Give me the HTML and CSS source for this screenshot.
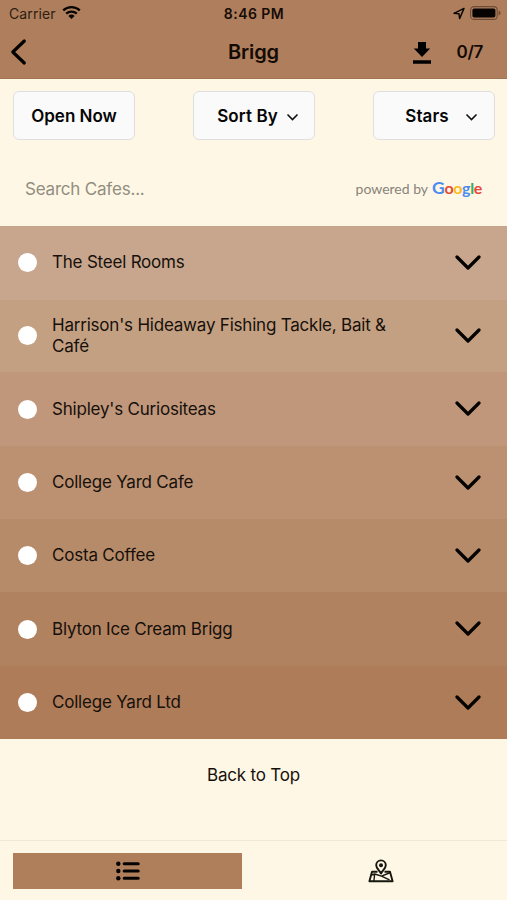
FILE: index.html
```html
<!DOCTYPE html>
<html lang="en">
<head>
<meta charset="utf-8">
<title>Brigg</title>
<link rel="stylesheet" href="styles.css">
</head>
<body>
<div class="app">
  <header class="header">
    <div class="status">
      <div class="status-left"><span class="carrier">Carrier</span>
        <svg class="wifi" width="19" height="15" viewBox="0 0 19 15"><g fill="none" stroke="#090503" stroke-width="2.3"><path d="M1.2 5.4a12 12 0 0 1 16.6 0"/><path d="M4.2 8.7a7.7 7.7 0 0 1 10.6 0"/></g><path d="M9.5 14 6.4 10.9a4.5 4.5 0 0 1 6.2 0Z" fill="#090503"/></svg>
      </div>
      <span class="time">8:46 PM</span>
      <div class="status-right">
        <svg width="12" height="13" viewBox="0 0 12 13"><path d="M1 6.3 11 1.4 6.6 11.6 6 6.8Z" fill="none" stroke="#090503" stroke-width="1.4" stroke-linejoin="round"/></svg>
        <svg width="31" height="14" viewBox="0 0 31 14"><rect x=".6" y=".6" width="26.6" height="12.8" rx="3.5" fill="none" stroke="#6f4c36" stroke-width="1.1"/><rect x="2.4" y="2.4" width="23" height="9.2" rx="1.8" fill="#060302"/><path d="M28.6 4.6q2 .8 2 2.4t-2 2.4Z" fill="#6f4c36"/></svg>
      </div>
    </div>
    <div class="nav">
      <svg class="back" width="18" height="28" viewBox="0 0 18 28"><path d="M15.300 3 3.800 14 15.300 25" fill="none" stroke="#000" stroke-width="3.2" stroke-linecap="round" stroke-linejoin="round"/></svg>
      <h1 class="title">Brigg</h1>
      <div class="nav-right">
        <svg class="download" width="20" height="24" viewBox="0 0 20 24"><path d="M6 1h8v6.5h4.2L10 16 1.8 7.500H6ZM1 19.200h18v3.600H1Z" fill="#000"/></svg>
        <span class="count">0/7</span>
      </div>
    </div>
  </header>
  <div class="filters">
    <button class="filter"><span class="label-open">Open Now</span></button>
    <button class="filter"><span class="label-sort">Sort By</span><svg class="chev-sort" width="13" height="9" viewBox="0 0 13 9"><path d="m1.500 1.500 5 5 5-5" fill="none" stroke="#111" stroke-width="1.600"/></svg></button>
    <button class="filter"><span class="label-stars">Stars</span><svg class="chev-stars" width="13" height="9" viewBox="0 0 13 9"><path d="m1.500 1.500 5 5 5-5" fill="none" stroke="#111" stroke-width="1.600"/></svg></button>
  </div>
  <div class="search">
    <span class="placeholder">Search Cafes...</span>
    <div class="powered"><span class="by">powered by</span><span class="google"><span class="b cap">G</span><span class="r">o</span><span class="y">o</span><span class="b">g</span><span class="g">l</span><span class="r">e</span></span></div>
  </div>
  <main class="list">
    <div class="row r1"><i class="dot"></i><span class="name">The Steel Rooms</span><svg class="chev" viewBox="0 0 26 16"><path d="M2 2 13 13 24 2"/></svg></div>
    <div class="row r2"><i class="dot"></i><span class="name">Harrison's Hideaway Fishing Tackle, Bait &amp;<br>Café</span><svg class="chev" viewBox="0 0 26 16"><path d="M2 2 13 13 24 2"/></svg></div>
    <div class="row r3"><i class="dot"></i><span class="name">Shipley's Curiositeas</span><svg class="chev" viewBox="0 0 26 16"><path d="M2 2 13 13 24 2"/></svg></div>
    <div class="row r4"><i class="dot"></i><span class="name">College Yard Cafe</span><svg class="chev" viewBox="0 0 26 16"><path d="M2 2 13 13 24 2"/></svg></div>
    <div class="row r5"><i class="dot"></i><span class="name">Costa Coffee</span><svg class="chev" viewBox="0 0 26 16"><path d="M2 2 13 13 24 2"/></svg></div>
    <div class="row r6"><i class="dot"></i><span class="name">Blyton Ice Cream Brigg</span><svg class="chev" viewBox="0 0 26 16"><path d="M2 2 13 13 24 2"/></svg></div>
    <div class="row r7"><i class="dot"></i><span class="name">College Yard Ltd</span><svg class="chev" viewBox="0 0 26 16"><path d="M2 2 13 13 24 2"/></svg></div>
  </main>
  <div class="top-link"><span>Back to Top</span></div>
  <footer class="tabs">
    <div class="tab active"><svg width="24" height="20" viewBox="0 0 24 20"><g fill="#050302"><circle cx="2.300" cy="2.800" r="2.200"/><circle cx="2.300" cy="10" r="2.200"/><circle cx="2.300" cy="17.200" r="2.200"/></g><path d="M8.200 2.800h14M8.200 10h14M8.200 17.200h14" stroke="#050302" stroke-width="3.100" stroke-linecap="round"/></svg></div>
    <div class="tab map"><svg width="26" height="24" viewBox="0 0 26 24"><g fill="none" stroke="#17160f" stroke-width="1.900" stroke-linejoin="round"><path d="M13 14.500C11.500 11.500 8.200 9.500 8.200 6.200a4.800 4.800 0 0 1 9.600 0c0 3.300-3.300 5.300-4.800 8.300Z"/><path d="M9.500 12.700H4L1.400 22.300h23.200L22 12.700h-5.500"/><path d="M3.300 16 6.700 15 13.500 17.200 22.500 13.500M6.700 15 5.900 22M13.500 17.200 21.500 20.800" stroke-width="1.400"/></g><circle cx="13" cy="6.200" r="2" fill="#17160f"/></svg></div>
  </footer>
</div>
</body>
</html>
```
FILE: styles.css
```css
* { box-sizing: border-box; }
body { margin: 0; font-family: Inter, "Liberation Sans", sans-serif; color: #16100b; background: #fff7e5; }
.app { width: 507px; height: 900px; display: flex; flex-direction: column; overflow: hidden; }
svg { display: block; flex: none; }
span { white-space: nowrap; }
.header { height: 79px; background: #af7e5c; border-bottom: 1px solid #a57452; flex: none; }
.status { height: 27px; display: grid; grid-template-columns: 1fr auto 1fr; align-items: center; padding: 0 6px 0 9px; }
.status-left { display: flex; align-items: center; gap: 6px; color: #2d1d13; }
.wifi { margin-top: -2px; }
.carrier { font-size: 14px; letter-spacing: 0.12px; }
.time { font-size: 14px; font-weight: 600; letter-spacing: 0.45px; margin-right: 2px; color: #150c07; }
.status-right { display: flex; justify-content: flex-end; align-items: center; gap: 5px; margin-top: -1px; }
.nav { height: 50px; display: grid; grid-template-columns: 1fr auto 1fr; align-items: center; padding: 0 24px 0 9px; }
.title { margin: 0 -7px 0 8px; font-size: 20px; font-weight: 600; letter-spacing: -0.1px; color: #120a05; }
.nav-right { display: flex; justify-content: flex-end; align-items: center; gap: 25px; }
.download { margin-top: 2px; }
.count { font-size: 17px; font-weight: 600; letter-spacing: -0.35px; color: #120a05; }
.filters { flex: none; height: 73px; padding: 12px 12px 0 13px; display: flex; justify-content: space-between; }
.filter { width: 122px; height: 49px; padding: 0; display: flex; align-items: center; justify-content: center; background: #fafafa; border: 1px solid #e0dfe0; border-radius: 6px; font: 600 17px Inter, sans-serif; color: #050505; }
.chev-sort { margin: 4px 0 0 8px; }
.label-sort { margin-left: 8px; letter-spacing: 0.1px; }
.label-stars { margin-left: 15px; letter-spacing: 0.1px; }
.chev-stars { margin: 4px 0 0 16px; }
.search { flex: none; height: 74px; display: flex; align-items: center; justify-content: space-between; padding: 0 25px; }
.placeholder { font-size: 17px; letter-spacing: -0.2px; color: #918e80; }
.powered { display: flex; align-items: baseline; gap: 4px; padding-bottom: 4px; }
.by { font: 14px Lato, sans-serif; color: #86847a; }
.google { font: 700 16px Lato, sans-serif; letter-spacing: -0.35px; }
.cap { font-size: 17.5px; }
.b { color: #4c8bf0; } .r { color: #e6493a; } .y { color: #f6bd1b; } .g { color: #3fa75a; }
.list { flex: none; height: 513px; display: grid; grid-template-rows: 74px 72px 74px 73px 73px 74px 73px; }
.row { display: flex; align-items: center; padding: 0 26px 0 18px; }
.dot { width: 19px; height: 19px; border-radius: 50%; background: #fff; flex: none; margin-right: 15px; }
.name { flex: 1; font-size: 17px; line-height: 21px; letter-spacing: -0.21px; }
.chev { width: 26px; height: 16px; fill: none; stroke: #050302; stroke-width: 3.2; stroke-linecap: round; stroke-linejoin: round; }
.r1 { background: #c7a68d; padding-bottom: 1px; } .r2 { background: #c4a082; padding-bottom: 1px; } .r3 { background: #c0977b; } .r4 { background: #bb9172; }
.r5 { background: #b68b69; } .r6 { background: #b18260; } .r7 { background: #ae7c59; }
.top-link { height: 101px; flex: none; text-align: center; padding-top: 26px; font-size: 17px; line-height: 21px; letter-spacing: -0.2px; }
.tabs { height: 60px; flex: none; border-top: 1px solid #f0e8d7; display: grid; grid-template-columns: 229px 229px; justify-content: space-between; padding: 12px 11px 11px 13px; }
.tab { display: flex; align-items: center; justify-content: center; }
.active { background: #af7e5b; }
.map { padding-right: 2px; }
```
